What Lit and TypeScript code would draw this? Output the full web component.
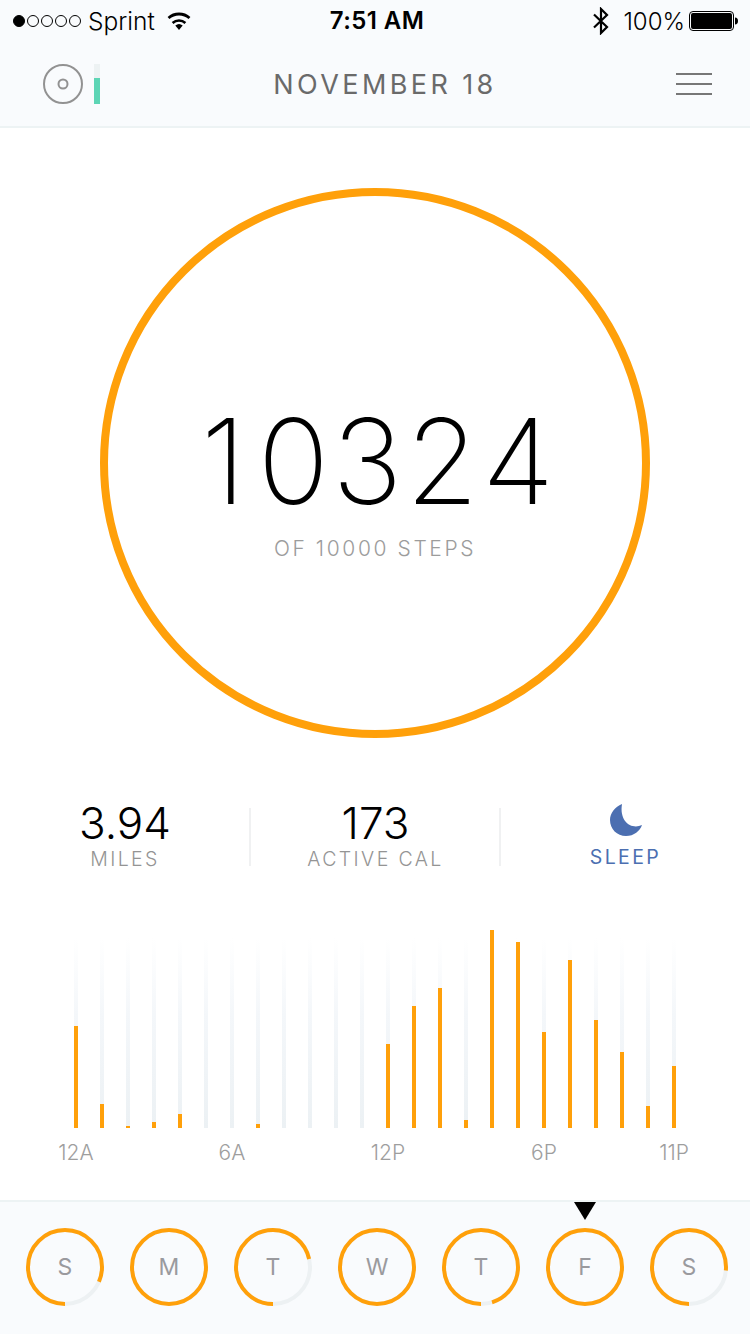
import { LitElement, css, html, svg } from 'lit'
import { customElement } from 'lit/decorators.js'

// orange height of each hourly bar, 12A to 11P
const HOURS = [102, 24, 2, 6, 14, 0, 0, 4, 0, 0, 0, 0, 84, 122, 140, 8, 198, 186, 96, 168, 108, 76, 22, 62]

const AXIS: Record<number, string> = { 0: '12A', 6: '6A', 12: '12P', 18: '6P', 23: '11P' }

// sweep = degrees of orange arc, clockwise from 6 o'clock
const DAYS = [
  { label: 'S', sweep: 293 },
  { label: 'M', sweep: 360 },
  { label: 'T', sweep: 257 },
  { label: 'W', sweep: 360 },
  { label: 'T', sweep: 342 },
  { label: 'F', sweep: 360, current: true },
  { label: 'S', sweep: 275 },
]

const RING_LEN = 2 * Math.PI * 37

function dayRing(sweep: number) {
  return svg`
    <circle cx="39" cy="39" r="37" fill="none" stroke="#edf1f3" stroke-width="4"></circle>
    <circle cx="39" cy="39" r="37" fill="none" stroke="#ffa00a" stroke-width="4"
      stroke-dasharray="${(sweep / 360) * RING_LEN} ${RING_LEN}"
      transform="rotate(90 39 39)"></circle>`
}

@customElement('app-root')
export class AppRoot extends LitElement {
  static styles = css`
    :host {
      display: block;
      width: 750px;
      height: 1334px;
      overflow: hidden;
      background: #fff;
      font-family: Inter, "Liberation Sans", sans-serif;
      color: #000;
    }

    .top {
      background: #f9fbfd;
      border-bottom: 2px solid #edf3f4;
      height: 126px;
      box-sizing: content-box;
    }

    .status {
      height: 42px;
      padding: 0 12px 0 13px;
      display: flex;
      align-items: center;
      font-size: 24px;
      position: relative;
    }

    .dots {
      display: flex;
      gap: 2px;
      margin-right: 7px;
    }

    .dots i {
      width: 12px;
      height: 12px;
      box-sizing: border-box;
      border: 1px solid #000;
      border-radius: 50%;
    }

    .dots i.on {
      background: #000;
    }

    .carrier {
      font-size: 24.5px;
      font-weight: 300;
    }

    .wifi {
      margin-left: 12px;
    }

    .time {
      position: absolute;
      left: 4px;
      right: 0;
      top: 7px;
      text-align: center;
      font-weight: 600;
      line-height: 28px;
      letter-spacing: 0.4px;
    }

    .right {
      margin-left: auto;
      display: flex;
      align-items: center;
    }

    .pct {
      margin: 0 4px 0 14px;
      font-size: 24px;
      font-weight: 300;
    }

    .nav {
      height: 84px;
      display: flex;
      align-items: center;
      justify-content: space-between;
      padding: 0 38px 0 43px;
    }

    .logo {
      display: flex;
      gap: 11px;
      align-items: center;
    }

    .logo-bar {
      width: 6px;
      height: 40px;
      background: #edf2f3;
      display: flex;
      align-items: flex-end;
    }

    .logo-bar div {
      width: 6px;
      height: 26px;
      background: #5dd5b5;
    }

    .date {
      font-size: 27px;
      letter-spacing: 3.4px;
      color: #6a6a6a;
      font-weight: 400;
      margin-right: 6px;
    }

    .burger {
      width: 36px;
      display: flex;
      flex-direction: column;
      gap: 8px;
    }

    .burger div {
      height: 2px;
      background: #777;
    }

    .goal {
      position: relative;
      width: 550px;
      height: 550px;
      margin: 60px auto 0;
    }

    .goal svg {
      display: block;
    }

    .goal-text {
      position: absolute;
      inset: 0;
      text-align: center;
    }

    .steps {
      margin-top: 203px;
      padding-left: 5px;
      font-size: 118px;
      line-height: 140px;
      font-weight: 200;
    }

    .steps .one {
      letter-spacing: 12px;
    }

    .steps .mid {
      letter-spacing: 3.3px;
    }

    .of {
      margin-top: 6px;
      font-size: 21px;
      line-height: 24px;
      letter-spacing: 2.6px;
      font-weight: 300;
      color: #9c9c9c;
    }

    .stats {
      display: grid;
      grid-template-columns: repeat(3, 250px);
      grid-template-rows: 58px;
      margin-top: 70px;
    }

    .stat {
      display: flex;
      flex-direction: column;
      align-items: center;
      box-sizing: border-box;
    }

    .stat + .stat {
      border-left: 2px solid #f0f1f2;
      margin-left: -1px;
    }

    .val {
      font-size: 44px;
      line-height: 46px;
      font-weight: 300;
      margin-top: -8px;
    }

    .lbl {
      font-size: 19.5px;
      line-height: 24px;
      letter-spacing: 2.4px;
      font-weight: 300;
      color: #949494;
      margin-top: 1px;
    }

    .moon {
      display: block;
      flex: none;
      margin-top: -4px;
    }

    .sleep {
      color: #4c6fb1;
      font-weight: 400;
      margin-top: 9px;
    }

    .chart {
      display: grid;
      grid-template-columns: repeat(24, 26px);
      padding: 0 63px;
      margin-top: 64px;
      height: 198px;
    }

    .col {
      display: flex;
      justify-content: center;
      align-items: flex-end;
    }

    .track {
      position: relative;
      width: 4px;
      height: 190px;
      background: linear-gradient(to bottom, #ffffff, #f4f7fa 40%, #ecf1f4);
    }

    .fill {
      position: absolute;
      left: 0;
      bottom: 0;
      width: 4px;
      background: #ffa00a;
    }

    .axis {
      display: grid;
      grid-template-columns: repeat(24, 26px);
      padding: 0 63px;
      margin-top: 13px;
      height: 22px;
    }

    .tick {
      display: flex;
      justify-content: center;
      white-space: nowrap;
      font-size: 21px;
      line-height: 24px;
      font-weight: 300;
      color: #9e9e9e;
    }

    .week {
      position: absolute;
      left: 0;
      top: 1200px;
      width: 750px;
      height: 134px;
      box-sizing: border-box;
      background: #f9fbfd;
      border-top: 2px solid #edf3f4;
      display: flex;
      gap: 26px;
      padding: 26px 0 0 26px;
    }

    .day {
      position: relative;
      width: 78px;
      height: 78px;
    }

    .day svg {
      display: block;
    }

    .day span {
      position: absolute;
      inset: 0;
      display: flex;
      align-items: center;
      justify-content: center;
      font-size: 23px;
      color: #9a9a9e;
    }

    .marker {
      position: absolute;
      left: 28px;
      top: -26px;
      width: 0;
      height: 0;
      border-left: 11px solid transparent;
      border-right: 11px solid transparent;
      border-top: 18px solid #000;
    }
  `

  render() {
    return html`
      <div class="top">
        <div class="status">
          <div class="dots"><i class="on"></i><i></i><i></i><i></i><i></i></div>
          <span class="carrier">Sprint</span>
          <svg class="wifi" width="24" height="18" viewBox="0 0 24 18">
            <path d="M12 18 8.3 13.6a5.6 5.6 0 0 1 7.4 0z" fill="#000"></path>
            <path d="M5.600 11a9.600 9.600 0 0 1 12.800 0" fill="none" stroke="#000" stroke-width="2.600"></path>
            <path d="M1.500 6a15.800 15.800 0 0 1 21 0" fill="none" stroke="#000" stroke-width="2.800"></path>
          </svg>
          <div class="time">7:51 AM</div>
          <div class="right">
            <svg width="16" height="28" viewBox="0 0 16 28">
              <path d="M1 7.500 14 20 8 26V2l6 6L1 20.500" fill="none" stroke="#000" stroke-width="2.200"></path>
            </svg>
            <span class="pct">100%</span>
            <svg width="49" height="20" viewBox="0 0 49 20">
              <rect x=".5" y=".5" width="44" height="19" rx="3.500" fill="none" stroke="#000"></rect>
              <rect x="2" y="2" width="41" height="16" rx="2" fill="#000"></rect>
              <path d="M46 6.500c2 0 3 1.500 3 3.500s-1 3.500-3 3.500z" fill="#000"></path>
            </svg>
          </div>
        </div>
        <div class="nav">
          <div class="logo">
            <svg width="40" height="40" viewBox="0 0 40 40">
              <circle cx="20" cy="20" r="19" fill="none" stroke="#929292" stroke-width="2"></circle>
              <circle cx="20" cy="20" r="4.500" fill="none" stroke="#929292" stroke-width="2"></circle>
            </svg>
            <div class="logo-bar"><div></div></div>
          </div>
          <div class="date">NOVEMBER 18</div>
          <div class="burger"><div></div><div></div><div></div></div>
        </div>
      </div>

      <div class="goal">
        <svg width="550" height="550" viewBox="0 0 550 550">
          <circle cx="275" cy="275" r="271" fill="none" stroke="#ffa00a" stroke-width="8"></circle>
        </svg>
        <div class="goal-text">
          <div class="steps"><span class="one">1</span><span class="mid">032</span>4</div>
          <div class="of">OF 10000 STEPS</div>
        </div>
      </div>

      <div class="stats">
        <div class="stat"><div class="val">3.94</div><div class="lbl">MILES</div></div>
        <div class="stat"><div class="val">173</div><div class="lbl">ACTIVE CAL</div></div>
        <div class="stat">
          <svg class="moon" width="32" height="32" viewBox="0 0 32 32">
            <path d="M12 0C5 3 0 9 0 16c0 9 7 16 16 16 8 0 14-5 16-11C22 26 9 18 12 0z" fill="#4c6fb1"></path>
          </svg>
          <div class="lbl sleep">SLEEP</div>
        </div>
      </div>

      <div class="chart">
        ${HOURS.map(h => html`
          <div class="col">
            <div class="track"><div class="fill" style="height:${h}px"></div></div>
          </div>
        `)}
      </div>
      <div class="axis">
        ${HOURS.map((_, i) => html`<div class="tick">${AXIS[i] ?? ''}</div>`)}
      </div>

      <div class="week">
        ${DAYS.map(d => html`
          <div class="day">
            ${d.current ? html`<div class="marker"></div>` : ''}
            <svg width="78" height="78" viewBox="0 0 78 78">${dayRing(d.sweep)}</svg>
            <span>${d.label}</span>
          </div>
        `)}
      </div>
    `
  }
}
